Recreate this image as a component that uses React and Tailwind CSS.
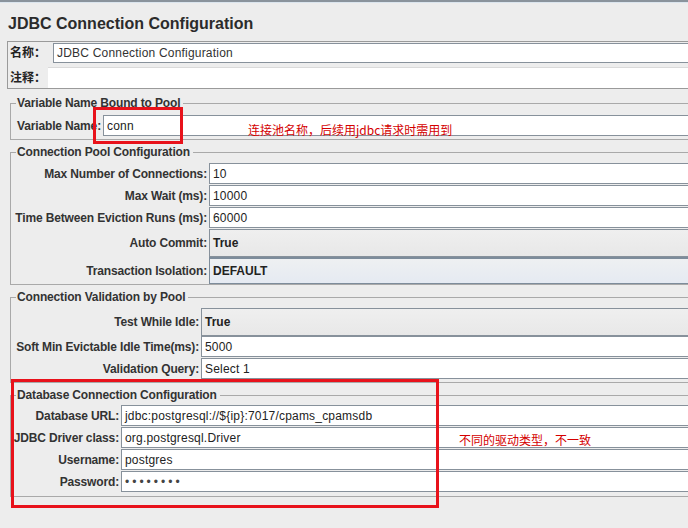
import React from "react";

function Field({ children, className = "tracking-[0.2px]" }) {
  return (
    <div className="h-[22px] flex">
      <div
        className={
          "flex-1 h-[21px] bg-white border-y border-l border-[#87919b] flex items-center pl-[3px] text-[12px] font-normal text-[#222] " +
          className
        }
      >
        {children}
      </div>
    </div>
  );
}

function Combo({ children, h = "h-[28px]", blue = false }) {
  return (
    <div className={"flex " + h}>
      <div
        className={
          "flex-1 border-y border-l flex items-center pl-[3px] text-[12px] font-bold text-[#222] " +
          (blue
            ? "border-t-2 border-[#7d8c9b] bg-gradient-to-b from-[#eef0f2] to-[#e5eaf2]"
            : "border-[#87919b] bg-gradient-to-b from-[#efefef] to-[#e8e8e8]")
        }
      >
        {children}
      </div>
    </div>
  );
}

function Row({ label, w, children }) {
  return (
    <div className="flex">
      <div
        className={
          "shrink-0 flex items-center justify-end pr-[2px] text-[12px] tracking-[-0.15px] font-bold text-[#333] whitespace-nowrap " +
          w
        }
      >
        {label}
      </div>
      <div className="flex-1 flex flex-col">{children}</div>
    </div>
  );
}

function Group({ title, bodyClass = "", children }) {
  return (
    <div className="flex flex-col">
      <div className="flex h-[14px]">
        <div className="mt-[7px] w-[6px] border-l border-t border-[#a9a9a9]" />
        <span className="pl-px pr-[3px] leading-[14px] text-[12px] tracking-[-0.15px] font-bold text-[#333] whitespace-nowrap">
          {title}
        </span>
        <div className="mt-[7px] flex-1 border-t border-[#a9a9a9]" />
      </div>
      <div className={"border-l border-b border-[#a9a9a9] " + bodyClass}>{children}</div>
    </div>
  );
}

export default function App() {
  return (
    <div className="relative w-[688px] h-[528px] overflow-hidden bg-[#ededed] font-['Liberation_Sans','Noto_Sans_CJK_SC',sans-serif]">
      <div className="w-[800px]">
        <div className="h-[2px] bg-[#8a939c]" />
        <div className="h-px bg-[#dbe5ee]" />
        <div className="h-[38px] flex items-center pt-[3px] pl-[8px] text-[16px] font-bold text-[#2b2b2b]">
          JDBC Connection Configuration
        </div>

        <div className="ml-[7px] border-y border-l border-[#9a9a9a]">
          <div className="h-[22px] flex">
            <div className="w-[45px] shrink-0 pl-[2px] flex items-center text-[12px] font-bold text-[#222]">
              名称：
            </div>
            <div className="flex-1 mt-px h-[20px] bg-white border-y border-l border-[#87919b] flex items-center pl-[3px] text-[12px] tracking-[0.2px] text-[#333]">
              JDBC Connection Configuration
            </div>
          </div>
          <div className="h-[24px] flex items-end">
            <div className="w-[40px] shrink-0 pl-[2px] h-[21px] flex items-center text-[12px] font-bold text-[#222]">
              注释：
            </div>
            <div className="flex-1 h-[21px] bg-white border-t border-[#dadada]" />
          </div>
        </div>

        <div className="ml-[10px] pt-[7px] flex flex-col gap-[5px]">
          <Group title="Variable Name Bound to Pool" bodyClass="pt-[5px] pb-[2px]">
            <Row label="Variable Name:" w="w-[92px]">
              <Field>conn</Field>
            </Row>
          </Group>

          <Group title="Connection Pool Configuration" bodyClass="pt-[4px]">
            <Row label="Max Number of Connections:" w="w-[198px]">
              <Field>10</Field>
            </Row>
            <Row label="Max Wait (ms):" w="w-[198px]">
              <Field>10000</Field>
            </Row>
            <Row label="Time Between Eviction Runs (ms):" w="w-[198px]">
              <Field>60000</Field>
            </Row>
            <Row label="Auto Commit:" w="w-[198px]">
              <Combo>True</Combo>
            </Row>
            <Row label="Transaction Isolation:" w="w-[198px]">
              <Combo h="h-[27px]" blue>
                DEFAULT
              </Combo>
            </Row>
          </Group>

          <Group title="Connection Validation by Pool" bodyClass="pt-[4px] pb-[2px]">
            <Row label="Test While Idle:" w="w-[190px]">
              <Combo>True</Combo>
            </Row>
            <Row label="Soft Min Evictable Idle Time(ms):" w="w-[190px]">
              <Field>5000</Field>
            </Row>
            <Row label="Validation Query:" w="w-[190px]">
              <Field>Select 1</Field>
            </Row>
          </Group>

          <Group title="Database Connection Configuration" bodyClass="pt-[3px] pb-[3px]">
            <Row label="Database URL:" w="w-[110px]">
              <Field>jdbc:postgresql://${"{"}ip{"}"}:7017/cpams_cpamsdb</Field>
            </Row>
            <Row label="JDBC Driver class:" w="w-[110px]">
              <Field>org.postgresql.Driver</Field>
            </Row>
            <Row label="Username:" w="w-[110px]">
              <Field>postgres</Field>
            </Row>
            <Row label="Password:" w="w-[110px]">
              <Field className="text-[8px] tracking-[3px] text-[#444]">••••••••</Field>
            </Row>
          </Group>
        </div>
      </div>

      <div className="pointer-events-none absolute left-[93px] top-[107px] w-[90px] h-[37px] border-[3px] border-[#e8121b]" />
      <div className="pointer-events-none absolute left-[11px] top-[379px] w-[428px] h-[129px] border-[3px] border-[#e8121b]" />
      <div className="absolute left-[248px] top-[123px] leading-[14px] text-[12px] text-[#d40000] font-['Noto_Sans_CJK_SC',sans-serif] whitespace-nowrap">
        连接池名称，后续用jdbc请求时需用到
      </div>
      <div className="absolute left-[459px] top-[433px] leading-[14px] text-[12px] text-[#d40000] font-['Noto_Sans_CJK_SC',sans-serif] whitespace-nowrap">
        不同的驱动类型，不一致
      </div>
    </div>
  );
}
